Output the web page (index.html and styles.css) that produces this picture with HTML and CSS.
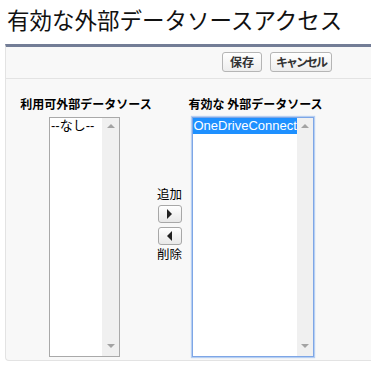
FILE: index.html
```html
<!DOCTYPE html>
<html lang="ja">
<head>
    <meta charset="UTF-8">
    <meta name="viewport" content="width=device-width, initial-scale=1.0">
    <title>有効な外部データソースアクセス</title>
    <link rel="stylesheet" href="styles.css">
</head>
<body>
    <h1 class="page-title">有効な外部データソースアクセス</h1>
    <div class="panel">
        <div class="panel-buttons">
            <button class="btn">保存</button>
            <button class="btn btn-cancel">キャンセル</button>
        </div>
        <div class="duel">
            <div class="duel-col left-col">
                <div class="duel-label">利用可外部データソース</div>
                <div class="listbox available">
                    <div class="list-items">
                        <div class="option">--なし--</div>
                    </div>
                    <div class="scrollbar">
                        <span class="arrow up"></span>
                        <span class="arrow down"></span>
                    </div>
                </div>
            </div>
            <div class="duel-mid">
                <div class="mid-text">追加</div>
                <button class="arrow-btn"><span class="tri right"></span></button>
                <button class="arrow-btn"><span class="tri left"></span></button>
                <div class="mid-text remove">削除</div>
            </div>
            <div class="duel-col right-col">
                <div class="duel-label">有効な 外部データソース</div>
                <div class="listbox selected-list">
                    <div class="list-items">
                        <div class="option selected">OneDriveConnect</div>
                    </div>
                    <div class="scrollbar">
                        <span class="arrow up"></span>
                        <span class="arrow down"></span>
                    </div>
                </div>
            </div>
        </div>
    </div>
</body>
</html>
```

FILE: styles.css
```css
body {
    margin: 0;
    padding: 0;
    background: #fff;
    color: #000;
    font-family: "Liberation Sans", "Noto Sans CJK JP", sans-serif;
}

.page-title {
    margin: 0;
    padding: 4px 0 0 7px;
    height: 40px;
    font-size: 22.5px;
    font-weight: normal;
    line-height: 30px;
    font-family: "Noto Sans CJK JP", sans-serif;
    color: #111;
}

.panel {
    margin-left: 5px;
    height: 313px;
    background: #f8f8f8;
    border-top: 3px solid #737d96;
    border-left: 1px solid #e3e3e3;
    border-bottom: 1px solid #e3e3e3;
    border-bottom-left-radius: 4px;
}

.panel-buttons {
    display: flex;
    gap: 8px;
    padding: 5px 0 0 216px;
    height: 26px;
    border-bottom: 1px solid #e3e3e3;
}

.btn {
    height: 20px;
    padding: 0 7px;
    margin: 0;
    font-family: "Noto Sans CJK JP", sans-serif;
    font-size: 12px;
    font-weight: bold;
    line-height: 16px;
    color: #333;
    background: linear-gradient(#ffffff, #ededed);
    border: 1px solid #b5b5b5;
    border-radius: 3px;
}

.btn-cancel {
    padding: 0 5px;
    letter-spacing: -2px;
}

.duel {
    display: flex;
    padding: 15px 0 0 15px;
}

.duel-col {
    display: flex;
    flex-direction: column;
    align-items: center;
}

.left-col {
    width: 130px;
}

.right-col {
    width: 133px;
    margin-left: 7px;
}

.duel-label {
    font-family: "Noto Sans CJK JP", sans-serif;
    font-size: 12px;
    font-weight: bold;
    line-height: 20px;
    height: 22px;
    margin-bottom: 1px;
    white-space: nowrap;
}

.listbox {
    display: flex;
    height: 238px;
    background: #fff;
}

.available {
    width: 69px;
    margin-right: 3px;
    border: 1px solid #a9a9a9;
}

.selected-list {
    width: 120px;
    margin-right: 6px;
    border: 1px solid #7ea6e6;
    box-shadow: 0 0 1px 1px #b6cff2;
}

.list-items {
    flex: 1;
}

.option {
    font-size: 13px;
    line-height: 16px;
    padding-left: 1px;
    white-space: nowrap;
}

.option.selected {
    background: #1e90ff;
    color: #fff;
}

.scrollbar {
    width: 17px;
    background: #f0f0f0;
    display: flex;
    flex-direction: column;
    justify-content: space-between;
    align-items: center;
    padding: 6px 0 8px;
}

.arrow {
    width: 0;
    height: 0;
    border-left: 4px solid transparent;
    border-right: 4px solid transparent;
}

.arrow.up {
    border-bottom: 4px solid #a3a3a3;
}

.arrow.down {
    border-top: 4px solid #a3a3a3;
}

.duel-mid {
    width: 25px;
    margin-left: 6px;
    padding-top: 92px;
    display: flex;
    flex-direction: column;
    align-items: center;
}

.mid-text {
    font-family: "Noto Sans CJK JP", sans-serif;
    font-size: 12.5px;
    line-height: 15px;
    height: 15px;
    white-space: nowrap;
}

.mid-text.remove {
    margin-top: 1px;
}

.arrow-btn {
    width: 24px;
    height: 18px;
    margin: 4px 0 0;
    padding: 0;
    display: flex;
    justify-content: center;
    align-items: center;
    background: linear-gradient(#ffffff, #e8e8e8);
    border: 1px solid #a8a8a8;
    border-radius: 3px;
}

.tri {
    width: 0;
    height: 0;
    border-top: 5px solid transparent;
    border-bottom: 5px solid transparent;
}

.tri.right {
    border-left: 5px solid #222;
}

.tri.left {
    border-right: 5px solid #222;
}
```
